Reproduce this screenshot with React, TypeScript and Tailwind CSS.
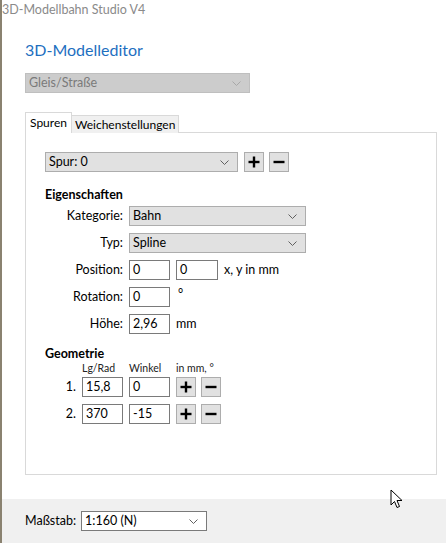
import React from "react";

const font = { fontFamily: 'Lato, "Noto Sans", sans-serif' };

function Chevron({ color = "#606060" }: { color?: string }) {
  return (
    <svg width="9" height="5" viewBox="0 0 9 5" className="shrink-0">
      <path d="M0.5 0.5 L4.5 4.5 L8.5 0.5" fill="none" stroke={color} strokeWidth="1" />
    </svg>
  );
}

function Select({ value, w, variant = "gray" }: { value: string; w: string; variant?: "gray" | "white" | "disabled" }) {
  const cls =
    variant === "gray"
      ? "bg-[#e1e1e1] border-[#adadad] text-black"
      : variant === "white"
      ? "bg-white border-[#7a7a7a] text-black"
      : "bg-[#cccccc] border-[#bfbfbf] text-[#7a7a7a]";
  return (
    <div className={`${w} h-[20px] border ${cls} flex items-center justify-between pl-[3px] pr-[8px] text-[12.5px] leading-none`}>
      <span>{value}</span>
      <Chevron color={variant === "disabled" ? "#a8a8a8" : "#606060"} />
    </div>
  );
}

function Input({ value, w = "w-[41px]" }: { value: string; w?: string }) {
  return (
    <div className={`${w} h-[20px] border border-[#7a7a7a] bg-white flex items-center pl-[3px] text-[12.5px] leading-none`}>
      {value}
    </div>
  );
}

function Btn({ kind }: { kind: "plus" | "minus" }) {
  return (
    <div className="w-[20px] h-[20px] border border-[#adadad] bg-[#e1e1e1] flex items-center justify-center">
      <svg width="12" height="12" viewBox="0 0 12 12">
        {kind === "plus" && <path d="M6 0.5 V11.5" stroke="#000" strokeWidth="2.4" />}
        <path d="M0.5 6 H11.5" stroke="#000" strokeWidth="2.4" />
      </svg>
    </div>
  );
}

function Row({ label, children }: { label: string; children: React.ReactNode }) {
  return (
    <div className="flex items-center gap-[6px]">
      <div className="w-[78px] text-right text-[12.5px] leading-none">{label}</div>
      {children}
    </div>
  );
}

export default function App() {
  return (
    <div style={font} className="w-[446px] h-[543px] flex flex-col bg-white text-black border-l-[2px] border-[#8a8270] relative overflow-hidden">
      <div className="text-[12.5px] leading-[20px] text-[#8a8a8a] h-[20px]">3D-Modellbahn Studio V4</div>
      <div className="flex-1 pl-[23px] pr-[9px]">
        <div className="mt-[19px] text-[16px] leading-[22px] text-[#1e6fbf]">3D-Modelleditor</div>
        <div className="mt-[12px]">
          <Select value="Gleis/Straße" w="w-[225px]" variant="disabled" />
        </div>
        <div className="mt-[20px] flex items-end h-[20px] relative z-10">
          <div className="h-[21px] px-[4px] bg-white border border-b-0 border-[#d9d9d9] text-[12px] flex items-center">Spuren</div>
          <div className="h-[18px] px-[3px] bg-[#f0f0f0] border border-l-0 border-b-0 border-[#d9d9d9] text-[12px] flex items-center">Weichenstellungen</div>
        </div>
        <div className="h-[343px] border border-[#d9d9d9] -mt-[1px] pl-[19px] pt-[19px]">
          <div className="flex items-center gap-[5px]">
            <Select value="Spur: 0" w="w-[193px]" />
            <div className="ml-[1px]"><Btn kind="plus" /></div>
            <Btn kind="minus" />
          </div>
          <div className="mt-[15px] text-[12.5px] font-bold leading-[16px]">Eigenschaften</div>
          <div className="mt-[3px] flex flex-col gap-[7px]">
            <Row label="Kategorie:"><Select value="Bahn" w="w-[177px]" /></Row>
            <Row label="Typ:"><Select value="Spline" w="w-[177px]" /></Row>
            <Row label="Position:">
              <Input value="0" />
              <Input value="0" w="w-[42px]" />
              <span className="text-[12.5px] leading-none">x, y in mm</span>
            </Row>
            <Row label="Rotation:">
              <Input value="0" />
              <span className="text-[12.5px] leading-none ml-[2px] -mt-[6px]">°</span>
            </Row>
            <Row label="Höhe:">
              <Input value="2,96" />
              <span className="text-[12.5px] leading-none">mm</span>
            </Row>
          </div>
          <div className="mt-[12px] text-[12.5px] font-bold leading-[16px]">Geometrie</div>
          <div className="flex text-[10.5px] leading-[12px] text-[#222]">
            <div className="w-[36px]" />
            <div className="w-[48px] pl-[1px]">Lg/Rad</div>
            <div className="w-[47px]">Winkel</div>
            <div>in mm, °</div>
          </div>
          <div className="mt-[3px] flex flex-col gap-[7px]">
            {[
              ["1.", "15,8", "0"],
              ["2.", "370", "-15"],
            ].map(([n, a, b]) => (
              <div key={n} className="flex items-center gap-[6px]">
                <div className="w-[31px] text-right text-[12.5px] leading-none">{n}</div>
                <Input value={a} />
                <Input value={b} />
                <Btn kind="plus" />
                <div className="-ml-[1px]"><Btn kind="minus" /></div>
              </div>
            ))}
          </div>
        </div>
      </div>
      <div className="h-[44px] bg-[#f0f0f0] flex items-center pl-[23px] gap-[5px]">
        <span className="text-[12.5px]">Maßstab:</span>
        <Select value="1:160 (N)" w="w-[126px]" variant="white" />
      </div>
      <svg className="absolute left-[388px] top-[489px]" width="14" height="21" viewBox="0 0 14 21">
        <path d="M1 1 L1 16 L4.5 12.5 L7 18.5 L9.5 17.5 L7 11.5 L12 11.5 Z" fill="#fff" stroke="#000" strokeWidth="1" strokeLinejoin="miter" />
      </svg>
    </div>
  );
}
